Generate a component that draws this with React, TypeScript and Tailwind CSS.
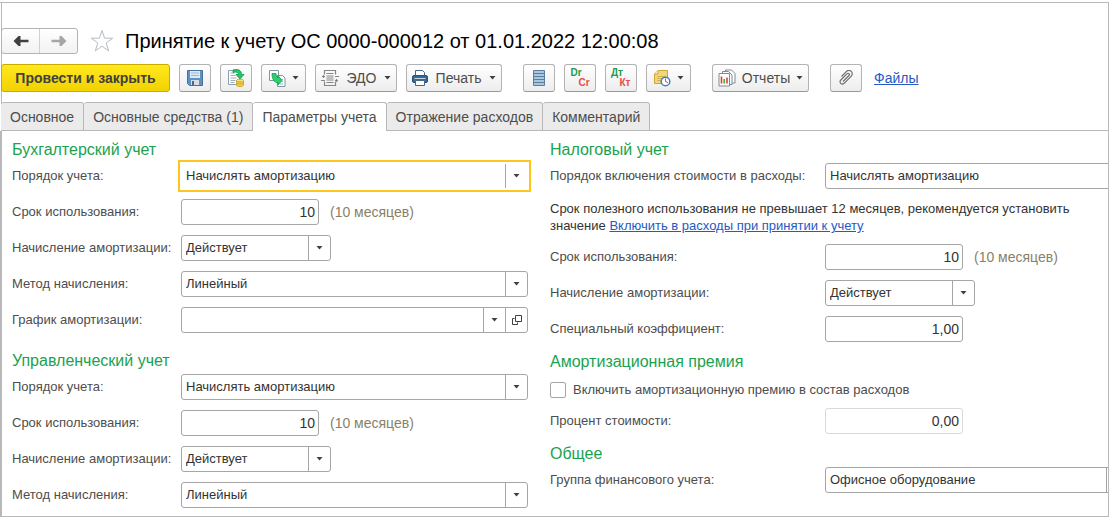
import type { ReactNode } from 'react';
import clsx from 'clsx';

interface FieldProps {
  id: string;
  label: string;
  labelClass: string;
  children: ReactNode;
}

interface ComboProps {
  id: string;
  value: string;
  className: string;
  focused?: boolean;
  openable?: boolean;
}

interface NumberBoxProps {
  id: string;
  value: string;
  disabled?: boolean;
}

const LEFT_LABEL = 'w-[169px]';
const RIGHT_LABEL = 'w-[275px]';

const tabs = [
  'Основное',
  'Основные средства (1)',
  'Параметры учета',
  'Отражение расходов',
  'Комментарий'
];

function Caret() {
  return (
    <svg width="7" height="4" viewBox="0 0 7 4" className="shrink-0">
      <path d="M0.5 0h6L3.5 3.6z" fill="#404040" />
    </svg>
  );
}

function Field({ id, label, labelClass, children }: FieldProps) {
  return (
    <div className="flex h-[26px] items-center">
      <label htmlFor={id} className={clsx('shrink-0 whitespace-nowrap', labelClass)}>
        {label}
      </label>
      {children}
    </div>
  );
}

function Combo({ id, value, className, focused, openable }: ComboProps) {
  return (
    <div
      className={clsx(
        'flex h-[26px] shrink-0 overflow-hidden border bg-white',
        focused
          ? 'border-transparent outline-2 outline-offset-1 outline-[#fcc61e]'
          : 'rounded-[3px] border-[#a6a6a6]',
        className
      )}
    >
      <div className="relative min-w-0 flex-1">
        <select id={id} defaultValue={value} className="size-full appearance-none pl-1 pr-6 text-[#333] outline-none">
          <option>{value}</option>
        </select>
        <span className="pointer-events-none absolute inset-y-0 right-0 flex w-[22px] items-center justify-center border-l border-[#a6a6a6]">
          <Caret />
        </span>
      </div>
      {openable && (
        <button aria-label="Открыть" className="flex w-[22px] items-center justify-center border-l border-[#a6a6a6]">
          <svg width="10" height="10" viewBox="0 0 10 10" fill="none" stroke="#404040">
            <path d="M3.5 0.5h6v6h-6z" />
            <path d="M2.5 3.5h-2v6h5v-2" />
          </svg>
        </button>
      )}
    </div>
  );
}

function NumberBox({ id, value, disabled }: NumberBoxProps) {
  return (
    <input
      id={id}
      type="text"
      defaultValue={value}
      disabled={disabled}
      className={clsx(
        'h-[26px] w-[138px] rounded-[3px] border bg-white px-[3px] text-right text-sm text-[#333]',
        disabled ? 'border-[#d9d9d9]' : 'border-[#a6a6a6]'
      )}
    />
  );
}

function Months() {
  return <span className="ml-[11px] text-sm text-[#8a7f66]">(10 месяцев)</span>;
}

function Heading({ children, className }: { children: ReactNode; className?: string }) {
  return <h2 className={clsx('mb-[3px] text-base leading-5 text-[#1aa24f]', className)}>{children}</h2>;
}

function ToolButton({ label, className, children }: { label: string; className: string; children: ReactNode }) {
  return (
    <button
      aria-label={label}
      className={clsx(
        'flex h-7 shrink-0 items-center justify-center rounded-[3px] border border-[#b3b3b3] border-b-[#999] bg-linear-to-b from-white to-[#ededed] text-[#4d4d4d]',
        className
      )}
    >
      {children}
    </button>
  );
}

function ArrowIcon({ flip, color }: { flip?: boolean; color: string }) {
  return (
    <svg width="16" height="12" viewBox="0 0 16 12" className={flip ? 'rotate-180' : undefined}>
      <path d="M0.500 6 5.500 1h2v3.700h8v2.600h-8V11h-2z" fill={color} />
    </svg>
  );
}

function SaveIcon() {
  return (
    <svg width="16" height="16" viewBox="0 0 16 16">
      <path d="M0.5 0.5h15v15h-13l-2-2z" fill="#5f92c4" stroke="#47719c" />
      <path d="M3 1h10v7H3z" fill="#dbe9f5" />
      <path d="M4 3h8M4 5.5h8" stroke="#9cb7d0" />
      <path d="M4 10h8v5H4z" fill="#d7dde3" />
      <path d="M5 11h2v4H5z" fill="#3b6a9b" />
    </svg>
  );
}

function PostIcon() {
  return (
    <svg width="18" height="18" viewBox="0 0 18 18">
      <path d="M1.5 1.5h11v14h-11z" fill="#fff" stroke="#8d9fae" />
      <path d="M3.5 4h4M3.5 6.5h5M3.5 9h6M3.5 11.5h5M3.5 13.5h4" stroke="#9db0bf" />
      <path d="M6 1c5.500-1.500 8.500.5 8.500 4.500H17l-4 4.500-4-4.500h2.500c0-2-2-3-5.500-2z" fill="#23c765" stroke="#14964a" strokeWidth=".8" />
      <path d="M9.500 11.500v4.500c0 2 7 2 7 0v-4.500z" fill="#f3ce48" stroke="#c99c22" strokeWidth=".8" />
      <ellipse cx="13" cy="11.500" rx="3.500" ry="1.300" fill="#fbe58c" stroke="#c99c22" strokeWidth=".8" />
      <path d="M9.500 13.800c1 1.400 6 1.400 7 0" fill="none" stroke="#c99c22" strokeWidth=".8" />
    </svg>
  );
}

function CreateFromIcon() {
  return (
    <svg width="18" height="18" viewBox="0 0 18 18">
      <path d="M1.500 1.500h9v10h-9z" fill="#fff" stroke="#7f96a8" />
      <path d="M9.500 6.500h5l2.500 2.500v8.500h-7.500z" fill="#fff" stroke="#7f96a8" />
      <path d="M13 10.500h2M14 12.500h1M12 15h3" stroke="#9db0bf" />
      <path d="M4 4.500h4c0 2 .5 3.500 2 4.500V6.500l4 5-4 4.500v-2.200C6 13.500 4 10 4 4.500z" fill="#2bd071" stroke="#14964a" strokeWidth=".8" />
    </svg>
  );
}

function EdoIcon() {
  return (
    <svg width="18" height="16" viewBox="0 0 18 16" fill="none" stroke="#858585" strokeWidth="1.200">
      <path d="M3.500 4.500v-4h11v4M3.500 11.500v4h11v-4" />
      <path d="M5.500 3.500h7M5.500 6h7M5.500 8h7M5.500 10h7M5.500 12.500h7" />
      <path d="M4 6.500H1M2.500 5v3M0 10.500h4M14 6.500h4M14 10.500h3M15.500 9v3" />
    </svg>
  );
}

function PrintIcon() {
  return (
    <svg width="16" height="16" viewBox="0 0 16 16">
      <path d="M3.500.5h7l2 2v4h-9z" fill="#fff" stroke="#44698c" />
      <rect x=".5" y="5.500" width="15" height="7" rx="1.500" fill="#376796" stroke="#28507a" />
      <path d="M2.500 8.500h11" stroke="#c3d6e8" />
      <path d="M3.500 10.500h9v5h-9z" fill="#fff" stroke="#44698c" />
    </svg>
  );
}

function RegisterIcon() {
  return (
    <svg width="12" height="16" viewBox="0 0 12 16">
      <path d="M.5.5h11v15H.5z" fill="#a9c8df" stroke="#587f9f" />
      <path d="M1 3.500h10M1 6.500h10M1 9.500h10M1 12.500h10" stroke="#587f9f" />
    </svg>
  );
}

function NoteClockIcon() {
  return (
    <svg width="18" height="18" viewBox="0 0 18 18">
      <path d="M5 1.500h9.500v13h-13V5z" fill="#f3d677" stroke="#cfa63c" />
      <path d="M5 1.500V5H1.500" fill="#fff3c4" stroke="#cfa63c" />
      <path d="M4 7.500h8M4 9.500h5M4 11.500h4" stroke="#d5b253" />
      <circle cx="12.500" cy="12.500" r="4.300" fill="#fff" stroke="#4a7fb5" strokeWidth="1.500" />
      <path d="M12.500 12.500V9.500M12.500 12.500l2.500 1" stroke="#e04a3f" />
    </svg>
  );
}

function ReportsIcon() {
  return (
    <svg width="18" height="18" viewBox="0 0 18 18">
      <path d="M7.500 1h6l3.500 3.500V14h-9.500z" fill="#fff" stroke="#7d8b96" />
      <path d="M4.500 2.500h6l3.500 3.500v9.500H4.500z" fill="#fff" stroke="#7d8b96" />
      <path d="M1 4.500h10.500V17H1z" fill="#fff" stroke="#7d8b96" />
      <path d="M3.500 7.500v7" stroke="#d8402f" strokeWidth="1.600" />
      <path d="M6.200 10v4.500" stroke="#3fae49" strokeWidth="1.600" />
      <path d="M9 8.500v6" stroke="#d8402f" strokeWidth="1.600" />
    </svg>
  );
}

function ClipIcon() {
  return (
    <svg width="16" height="16" viewBox="0 0 16 16" fill="none" stroke="#6e6e6e" strokeWidth="1.200">
      <path d="M5 11.500 11 5.500c1.200-1.200-.6-3-1.800-1.800L2.800 10c-2.300 2.300 1 5.500 3.300 3.300l7-7c3.400-3.400-1.400-8-4.800-4.700L3.500 6.500" />
    </svg>
  );
}

function Header() {
  return (
    <header className="ml-px border-l border-[#b8b8b8] pt-[25px]">
      <div className="-ml-px flex h-[26px] items-center">
        <div className="flex h-[26px] shrink-0 rounded-[3px] border border-[#b3b3b3] bg-linear-to-b from-white to-[#f2f2f2]">
          <button aria-label="Назад" className="flex w-[38px] items-center justify-center border-r border-[#d0d0d0]">
            <ArrowIcon color="#404040" />
          </button>
          <button aria-label="Вперед" className="flex w-[37px] items-center justify-center">
            <ArrowIcon flip color="#a6a6a6" />
          </button>
        </div>
        <button aria-label="Избранное" className="ml-3">
          <svg width="24" height="24" viewBox="0 0 24 24">
            <path
              d="M12 1.500l2.600 7.700h8.100l-6.500 4.800 2.500 7.900-6.700-4.800-6.700 4.800 2.500-7.900L1.300 9.200h8.100z"
              fill="#fff"
              stroke="#b4bcc4"
            />
          </svg>
        </button>
        <h1 className="ml-[11px] truncate text-xl text-black">Принятие к учету ОС 0000-000012 от 01.01.2022 12:00:08</h1>
      </div>

      <div className="-ml-px mt-2.5 flex items-center gap-[9px]">
        <button className="h-7 w-[169px] shrink-0 rounded-[3px] border border-[#c9ab00] bg-linear-to-b from-[#ffe81c] to-[#f2d200] font-bold text-[#404040]">
          Провести и закрыть
        </button>
        <ToolButton label="Записать" className="w-8"><SaveIcon /></ToolButton>
        <ToolButton label="Провести" className="w-8"><PostIcon /></ToolButton>
        <ToolButton label="Создать на основании" className="w-[45px] gap-1.5"><CreateFromIcon /><Caret /></ToolButton>
        <ToolButton label="ЭДО" className="w-[82px] gap-2"><EdoIcon />ЭДО<Caret /></ToolButton>
        <ToolButton label="Печать" className="w-24 gap-2"><PrintIcon />Печать<Caret /></ToolButton>
        <ToolButton label="Регистр" className="ml-3 w-8"><RegisterIcon /></ToolButton>
        <ToolButton label="Dr Cr" className="w-8 text-[10px] leading-none font-bold">
          <span className="flex flex-col">
            <span className="pr-2 text-[#1d9a4b]">Dr</span>
            <span className="pl-2 text-[#ea4b4b]">Cr</span>
          </span>
        </ToolButton>
        <ToolButton label="Дт Кт" className="w-8 text-[10px] leading-none font-bold">
          <span className="flex flex-col">
            <span className="pr-2 text-[#1d9a4b]">Дт</span>
            <span className="pl-2 text-[#ea4b4b]">Кт</span>
          </span>
        </ToolButton>
        <ToolButton label="Задачи" className="w-[45px] gap-1.5"><NoteClockIcon /><Caret /></ToolButton>
        <ToolButton label="Отчеты" className="ml-3 w-[97px] gap-1.5"><ReportsIcon />Отчеты<Caret /></ToolButton>
        <ToolButton label="Вложения" className="ml-3 w-8"><ClipIcon /></ToolButton>
        <a href="#files" className="ml-[3px] text-[#2659c4] underline">Файлы</a>
      </div>

      <nav className="-ml-px mt-2.5 flex h-[29px]">
        {tabs.map((tab, i) => (
          <button
            key={tab}
            className={clsx(
              'shrink-0 rounded-t-[3px] border-t border-r border-[#b8b8b8] px-[9px]',
              i === 2 ? 'bg-white' : 'border-b bg-[#ebebeb]'
            )}
          >
            {tab}
          </button>
        ))}
        <div className="flex-1 border-b border-[#b8b8b8]" />
      </nav>
    </header>
  );
}

export default function App() {
  return (
    <div className="flex min-h-screen flex-col bg-white pt-0.5 font-['Liberation_Sans',Arial,sans-serif] text-sm text-[#4d4d4d]">
      <div className="flex flex-1 flex-col border-y border-r border-[#b8b8b8]">
        <Header />

        <main className="flex flex-1 border-l-2 border-[#b8b8b8] pt-[9px] pb-[7px] pl-[10px] text-[13px]">
          <section className="w-[538px] shrink-0">
            <Heading>Бухгалтерский учет</Heading>
            <div className="flex flex-col gap-2.5">
              <Field id="acc-order" label="Порядок учета:" labelClass={LEFT_LABEL}>
                <Combo id="acc-order" value="Начислять амортизацию" className="w-[347px]" focused />
              </Field>
              <Field id="acc-term" label="Срок использования:" labelClass={LEFT_LABEL}>
                <NumberBox id="acc-term" value="10" />
                <Months />
              </Field>
              <Field id="acc-charge" label="Начисление амортизации:" labelClass={LEFT_LABEL}>
                <Combo id="acc-charge" value="Действует" className="w-[150px]" />
              </Field>
              <Field id="acc-method" label="Метод начисления:" labelClass={LEFT_LABEL}>
                <Combo id="acc-method" value="Линейный" className="w-[347px]" />
              </Field>
              <Field id="acc-schedule" label="График амортизации:" labelClass={LEFT_LABEL}>
                <Combo id="acc-schedule" value="" className="w-[347px]" openable />
              </Field>
            </div>

            <Heading className="mt-[18px]">Управленческий учет</Heading>
            <div className="flex flex-col gap-2.5">
              <Field id="mgmt-order" label="Порядок учета:" labelClass={LEFT_LABEL}>
                <Combo id="mgmt-order" value="Начислять амортизацию" className="w-[347px]" />
              </Field>
              <Field id="mgmt-term" label="Срок использования:" labelClass={LEFT_LABEL}>
                <NumberBox id="mgmt-term" value="10" />
                <Months />
              </Field>
              <Field id="mgmt-charge" label="Начисление амортизации:" labelClass={LEFT_LABEL}>
                <Combo id="mgmt-charge" value="Действует" className="w-[150px]" />
              </Field>
              <Field id="mgmt-method" label="Метод начисления:" labelClass={LEFT_LABEL}>
                <Combo id="mgmt-method" value="Линейный" className="w-[347px]" />
              </Field>
            </div>
          </section>

          <section className="min-w-0 flex-1 overflow-hidden">
            <Heading>Налоговый учет</Heading>
            <div className="flex flex-col gap-2.5">
              <Field id="tax-order" label="Порядок включения стоимости в расходы:" labelClass={RIGHT_LABEL}>
                <Combo id="tax-order" value="Начислять амортизацию" className="w-[347px]" />
              </Field>
              <p className="pt-px leading-[17px] text-[#333]">
                Срок полезного использования не превышает 12 месяцев, рекомендуется установить значение{' '}
                <a href="#include" className="text-[#2659c4] underline">Включить в расходы при принятии к учету</a>
              </p>
              <Field id="tax-term" label="Срок использования:" labelClass={RIGHT_LABEL}>
                <NumberBox id="tax-term" value="10" />
                <Months />
              </Field>
              <Field id="tax-charge" label="Начисление амортизации:" labelClass={RIGHT_LABEL}>
                <Combo id="tax-charge" value="Действует" className="w-[150px]" />
              </Field>
              <Field id="tax-factor" label="Специальный коэффициент:" labelClass={RIGHT_LABEL}>
                <NumberBox id="tax-factor" value="1,00" />
              </Field>
            </div>

            <Heading className="mt-2.5">Амортизационная премия</Heading>
            <div className="flex flex-col gap-2.5 pt-[7px]">
              <label className="flex h-4 items-center gap-[7px]">
                <input type="checkbox" className="size-4 appearance-none rounded-[2px] border border-[#a6a6a6] bg-white" />
                Включить амортизационную премию в состав расходов
              </label>
              <Field id="bonus-percent" label="Процент стоимости:" labelClass={RIGHT_LABEL}>
                <NumberBox id="bonus-percent" value="0,00" disabled />
              </Field>
            </div>

            <Heading className="mt-2.5">Общее</Heading>
            <Field id="group" label="Группа финансового учета:" labelClass={RIGHT_LABEL}>
              <Combo id="group" value="Офисное оборудование" className="w-[304px]" />
            </Field>
          </section>
        </main>
      </div>
    </div>
  );
}
